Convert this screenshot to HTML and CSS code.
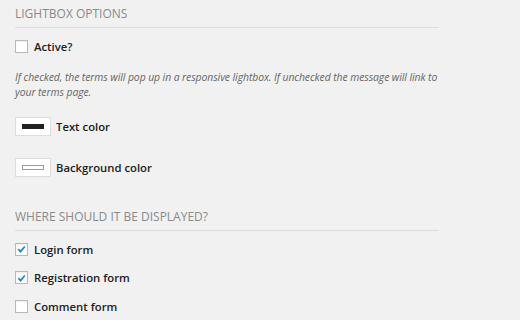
FILE: index.html
```html
<!DOCTYPE html>
<html lang="en">
<head>
    <meta charset="UTF-8">
    <title>Lightbox Options</title>
    <link rel="stylesheet" href="styles.css">
</head>
<body>
    <div class="settings">
        <div class="section-title">LIGHTBOX OPTIONS</div>

        <label class="check-row first">
            <span class="checkbox"></span>
            <span class="check-label">Active?</span>
        </label>

        <p class="description">
            If checked, the terms will pop up in a responsive lightbox. If unchecked the message will link to<br>
            your terms page.
        </p>

        <div class="color-row text-color">
            <span class="swatch"><span class="swatch-bar dark"></span></span>
            <span class="check-label">Text color</span>
        </div>

        <div class="color-row bg-color">
            <span class="swatch"><span class="swatch-bar light"></span></span>
            <span class="check-label">Background color</span>
        </div>

        <div class="section-title second">WHERE SHOULD IT BE DISPLAYED?</div>

        <label class="check-row first">
            <span class="checkbox checked">
                <svg viewBox="0 0 12 12" width="12" height="12"><path d="M2.5 6.2 L5 8.8 L9.6 3.2" fill="none" stroke="#1e8cbe" stroke-width="1.9"/></svg>
            </span>
            <span class="check-label">Login form</span>
        </label>
        <label class="check-row">
            <span class="checkbox checked">
                <svg viewBox="0 0 12 12" width="12" height="12"><path d="M2.5 6.2 L5 8.8 L9.6 3.2" fill="none" stroke="#1e8cbe" stroke-width="1.9"/></svg>
            </span>
            <span class="check-label">Registration form</span>
        </label>
        <label class="check-row">
            <span class="checkbox"></span>
            <span class="check-label">Comment form</span>
        </label>
    </div>
</body>
</html>
```

FILE: styles.css
```css
body {
    margin: 0;
    background-color: #f1f1f1;
    font-family: "Open Sans", "Noto Sans", sans-serif;
    color: #222;
}

.settings {
    width: 424px;
    padding: 5px 0 0 15px;
    display: flex;
    flex-direction: column;
}

.section-title {
    font-size: 12px;
    line-height: 18px;
    color: #8a8a8a;
    padding-bottom: 4px;
    border-bottom: 1px solid #dcdcdc;
}

.section-title.second {
    margin-top: 31px;
}

.check-row {
    display: flex;
    align-items: center;
    gap: 6px;
    height: 18px;
    margin-top: 10.5px;
}

.check-row.first {
    margin-top: 9px;
}

.checkbox {
    width: 11px;
    height: 11px;
    border: 1px solid #b4b9be;
    background: #fff;
    box-shadow: inset 0 1px 2px rgba(0, 0, 0, 0.07);
    display: flex;
    align-items: center;
    justify-content: center;
}

.check-label {
    font-size: 11.3px;
    font-weight: 600;
    color: #222;
}

.description {
    margin: 15px 0 0;
    font-size: 10.4px;
    font-style: italic;
    line-height: 15px;
    color: #666;
    letter-spacing: -0.08px;
    white-space: nowrap;
}

.color-row {
    display: flex;
    align-items: center;
    gap: 5px;
}

.text-color {
    margin-top: 17px;
}

.bg-color {
    margin-top: 22px;
}

.swatch {
    width: 34px;
    height: 17px;
    border: 1px solid #ddd;
    background: #fff;
    display: flex;
    align-items: center;
    justify-content: center;
}

.swatch-bar {
    width: 22px;
    height: 5px;
    box-sizing: border-box;
}

.swatch-bar.dark {
    background: #222;
}

.swatch-bar.light {
    background: #fff;
    border: 1px solid #999;
}
```
